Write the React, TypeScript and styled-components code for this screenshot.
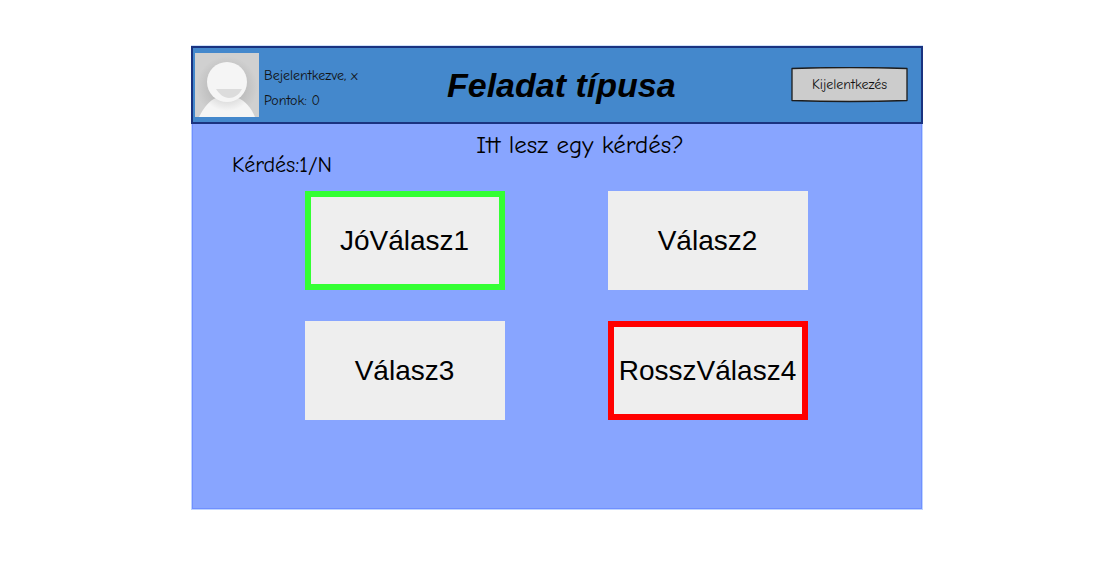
import React from "react";
import styled, { createGlobalStyle } from "styled-components";

const GlobalStyle = createGlobalStyle`
  * { box-sizing: border-box; }
  body { margin: 0; background: #fff; color: #000; font-variant-ligatures: none; }
  button { font-variant-ligatures: none; }
`;

const hand = `"Comic Sans MS", "Comic Neue", "Open Sans", sans-serif`;
const sans = `"Liberation Sans", Arial, sans-serif`;

const Page = styled.div`
  padding: 45px 184px 53px 191px;
`;

const Panel = styled.main`
  border-top: 1px solid #cfe2fa;
`;

const Header = styled.header`
  display: flex;
  align-items: center;
  min-height: 78px;
  padding: 0 13px 0 2px;
  border: 2px solid #1a3380;
  background: #4488cc;
`;

const User = styled.div`
  display: flex;
  align-items: center;
  gap: 5px;
  min-width: 252px;
`;

const Avatar = styled.svg`
  display: block;
  width: 64px;
  height: 64px;
`;

const UserLines = styled.div`
  padding-top: 6px;
  font-family: ${hand};
  font-size: 14px;
  line-height: 25px;
  color: #111;
`;

const Title = styled.h1`
  margin: 0;
  font-family: ${sans};
  font-size: 34px;
  font-style: italic;
  line-height: 40px;
  white-space: nowrap;
`;

const LogoutButton = styled.button`
  position: relative;
  width: 117px;
  height: 36px;
  margin-left: auto;
  padding: 0;
  border: 0;
  background: none;
  font-family: ${hand};
  font-size: 14px;
  line-height: 20px;
  color: #111;
`;

const ButtonShape = styled.svg`
  position: absolute;
  inset: 0;
  width: 100%;
  height: 100%;
`;

const ButtonLabel = styled.span`
  position: relative;
`;

const Body = styled.section`
  min-height: 386px;
  padding: 10px 42px 10px 40px;
  border: 1px solid #bfd4ff;
  border-top: 0;
  background: #88a5ff;
  box-shadow: inset 1px 0 #7090ff, inset -1px 0 #7090ff, inset 0 -1px #7090ff;
`;

const Question = styled.h2`
  margin: 0;
  padding-left: 48px;
  font-family: ${hand};
  font-size: 25px;
  font-weight: 400;
  line-height: 22px;
  text-align: center;
`;

const Progress = styled.p`
  margin: 0;
  font-family: ${hand};
  font-size: 22px;
  line-height: 18px;
`;

const Answers = styled.div`
  display: grid;
  grid-template-columns: 200px 200px;
  justify-content: center;
  gap: 31px 103px;
  margin-top: 17px;
`;

const Answer = styled.button<{ $mark?: string }>`
  height: 99px;
  padding: 0;
  border: ${(p) => (p.$mark ? `6px solid ${p.$mark}` : "0")};
  border-radius: 0;
  background: #eee;
  color: #000;
  font-family: ${sans};
  font-size: 28px;
  line-height: 34px;
  white-space: nowrap;
`;

const answers = [
  { text: "JóVálasz1", mark: "#33ff33" },
  { text: "Válasz2" },
  { text: "Válasz3" },
  { text: "RosszVálasz4", mark: "#ff0000" },
];

export default function App() {
  return (
    <Page>
      <GlobalStyle />
      <Panel>
        <Header>
          <User>
            <Avatar viewBox="0 0 64 64" aria-hidden="true">
              <defs>
                <radialGradient id="shade" cx="32" cy="34" r="34" gradientUnits="userSpaceOnUse">
                  <stop offset="0.5" stopColor="#bebebe" />
                  <stop offset="0.9" stopColor="#d0d0d0" />
                </radialGradient>
                <radialGradient id="neck" cx="32" cy="30" r="28" gradientUnits="userSpaceOnUse">
                  <stop offset="0.65" stopColor="#dedede" />
                  <stop offset="1" stopColor="#f5f5f5" />
                </radialGradient>
              </defs>
              <rect width="64" height="64" fill="url(#shade)" />
              <path d="M4 64C9 54 14 48 21 45H43C50 48 56 54 60 64Z" fill="url(#neck)" />
              <circle cx="32" cy="29" r="20" fill="#f5f5f5" />
              <path d="M21 36H47C44 42 39 45 34 45C29 45 24 41 21 36Z" fill="#dcdcdc" />
            </Avatar>
            <UserLines>
              <div>Bejelentkezve, x</div>
              <div>Pontok: 0</div>
            </UserLines>
          </User>
          <Title>Feladat típusa</Title>
          <LogoutButton type="button">
            <ButtonShape viewBox="0 0 117 36" aria-hidden="true">
              <path
                d="M1 1.5Q58.5 -0.5 116 1.5V33.5Q58.5 35.5 1 33.5Z"
                fill="#ccc"
                stroke="#1c1c1c"
                strokeWidth="1.3"
                strokeLinejoin="round"
              />
            </ButtonShape>
            <ButtonLabel>Kijelentkezés</ButtonLabel>
          </LogoutButton>
        </Header>
        <Body>
          <Question>Itt lesz egy kérdés?</Question>
          <Progress>Kérdés:1/N</Progress>
          <Answers>
            {answers.map((a) => (
              <Answer key={a.text} type="button" $mark={a.mark}>
                {a.text}
              </Answer>
            ))}
          </Answers>
        </Body>
      </Panel>
    </Page>
  );
}
